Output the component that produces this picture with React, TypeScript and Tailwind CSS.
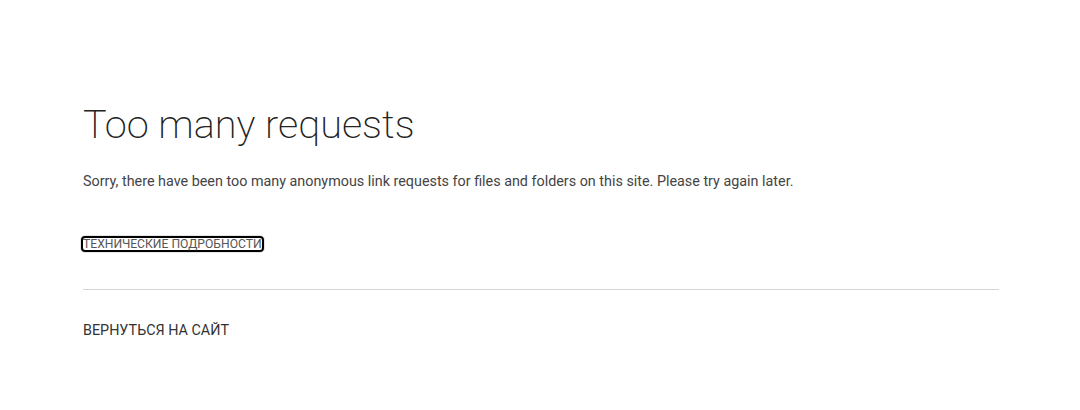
export default function App() {
  return (
    <div className="min-h-[410px] bg-white font-['Roboto',sans-serif]">
      <div className="pl-[83px] pr-[81px] pt-[99px]">
        <h1 className="text-[39.7px] font-extralight leading-[51px] text-[#222]">Too many requests</h1>
        <p className="mt-[22px] text-[14.35px] leading-[20px] text-[#444]">
          Sorry, there have been too many anonymous link requests for files and folders on this site. Please try again later.
        </p>
        <div className="mt-[44px] flex">
          <button className="-ml-[2px] rounded-[4px] border-2 border-black px-0 text-[12.15px] leading-[12px] text-[#555] uppercase shadow-[0_0_0_1px_#e5e5e5]">
            Технические подробности
          </button>
        </div>
        <div className="mt-[37px] border-t border-[#d4d4d4]" />
        <div className="mt-[31px] text-[14.35px] leading-[20px] text-[#333]">ВЕРНУТЬСЯ НА САЙТ</div>
      </div>
    </div>
  );
}
